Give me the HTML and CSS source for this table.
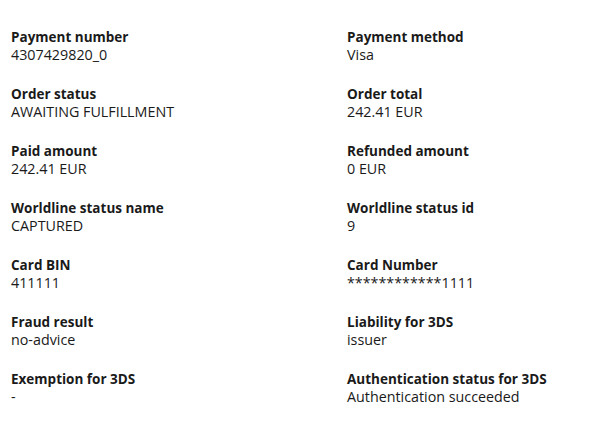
FILE: index.html
```html
<!DOCTYPE html>
<html lang="en">
<head>
<meta charset="utf-8">
<title>Payment details</title>
<link rel="stylesheet" href="styles.css">
</head>
<body>
<dl class="details">
  <div class="item"><dt>Payment number</dt><dd>4307429820_0</dd></div>
  <div class="item"><dt>Payment method</dt><dd>Visa</dd></div>
  <div class="item"><dt>Order status</dt><dd>AWAITING FULFILLMENT</dd></div>
  <div class="item"><dt>Order total</dt><dd>242.41 EUR</dd></div>
  <div class="item"><dt>Paid amount</dt><dd>242.41 EUR</dd></div>
  <div class="item"><dt>Refunded amount</dt><dd>0 EUR</dd></div>
  <div class="item"><dt>Worldline status name</dt><dd>CAPTURED</dd></div>
  <div class="item"><dt>Worldline status id</dt><dd>9</dd></div>
  <div class="item"><dt>Card BIN</dt><dd>411111</dd></div>
  <div class="item"><dt>Card Number</dt><dd>************1111</dd></div>
  <div class="item"><dt>Fraud result</dt><dd>no-advice</dd></div>
  <div class="item"><dt>Liability for 3DS</dt><dd>issuer</dd></div>
  <div class="item"><dt>Exemption for 3DS</dt><dd>-</dd></div>
  <div class="item"><dt>Authentication status for 3DS</dt><dd>Authentication succeeded</dd></div>
</dl>
</body>
</html>
```
FILE: styles.css
```css
html, body {
  margin: 0;
  background: #ffffff;
}
body {
  font-family: "Open Sans", "Noto Sans", sans-serif;
  color: #1a1a1a;
}
.details {
  margin: 0;
  padding: 28px 11px;
  display: grid;
  grid-template-columns: 336px 1fr;
  row-gap: 21px;
}
.item dt {
  font-size: 13.5px;
  font-weight: 700;
  line-height: 18px;
  margin: 0;
}
.item dd {
  font-size: 14.3px;
  margin: 0;
  line-height: 18px;
}
```
